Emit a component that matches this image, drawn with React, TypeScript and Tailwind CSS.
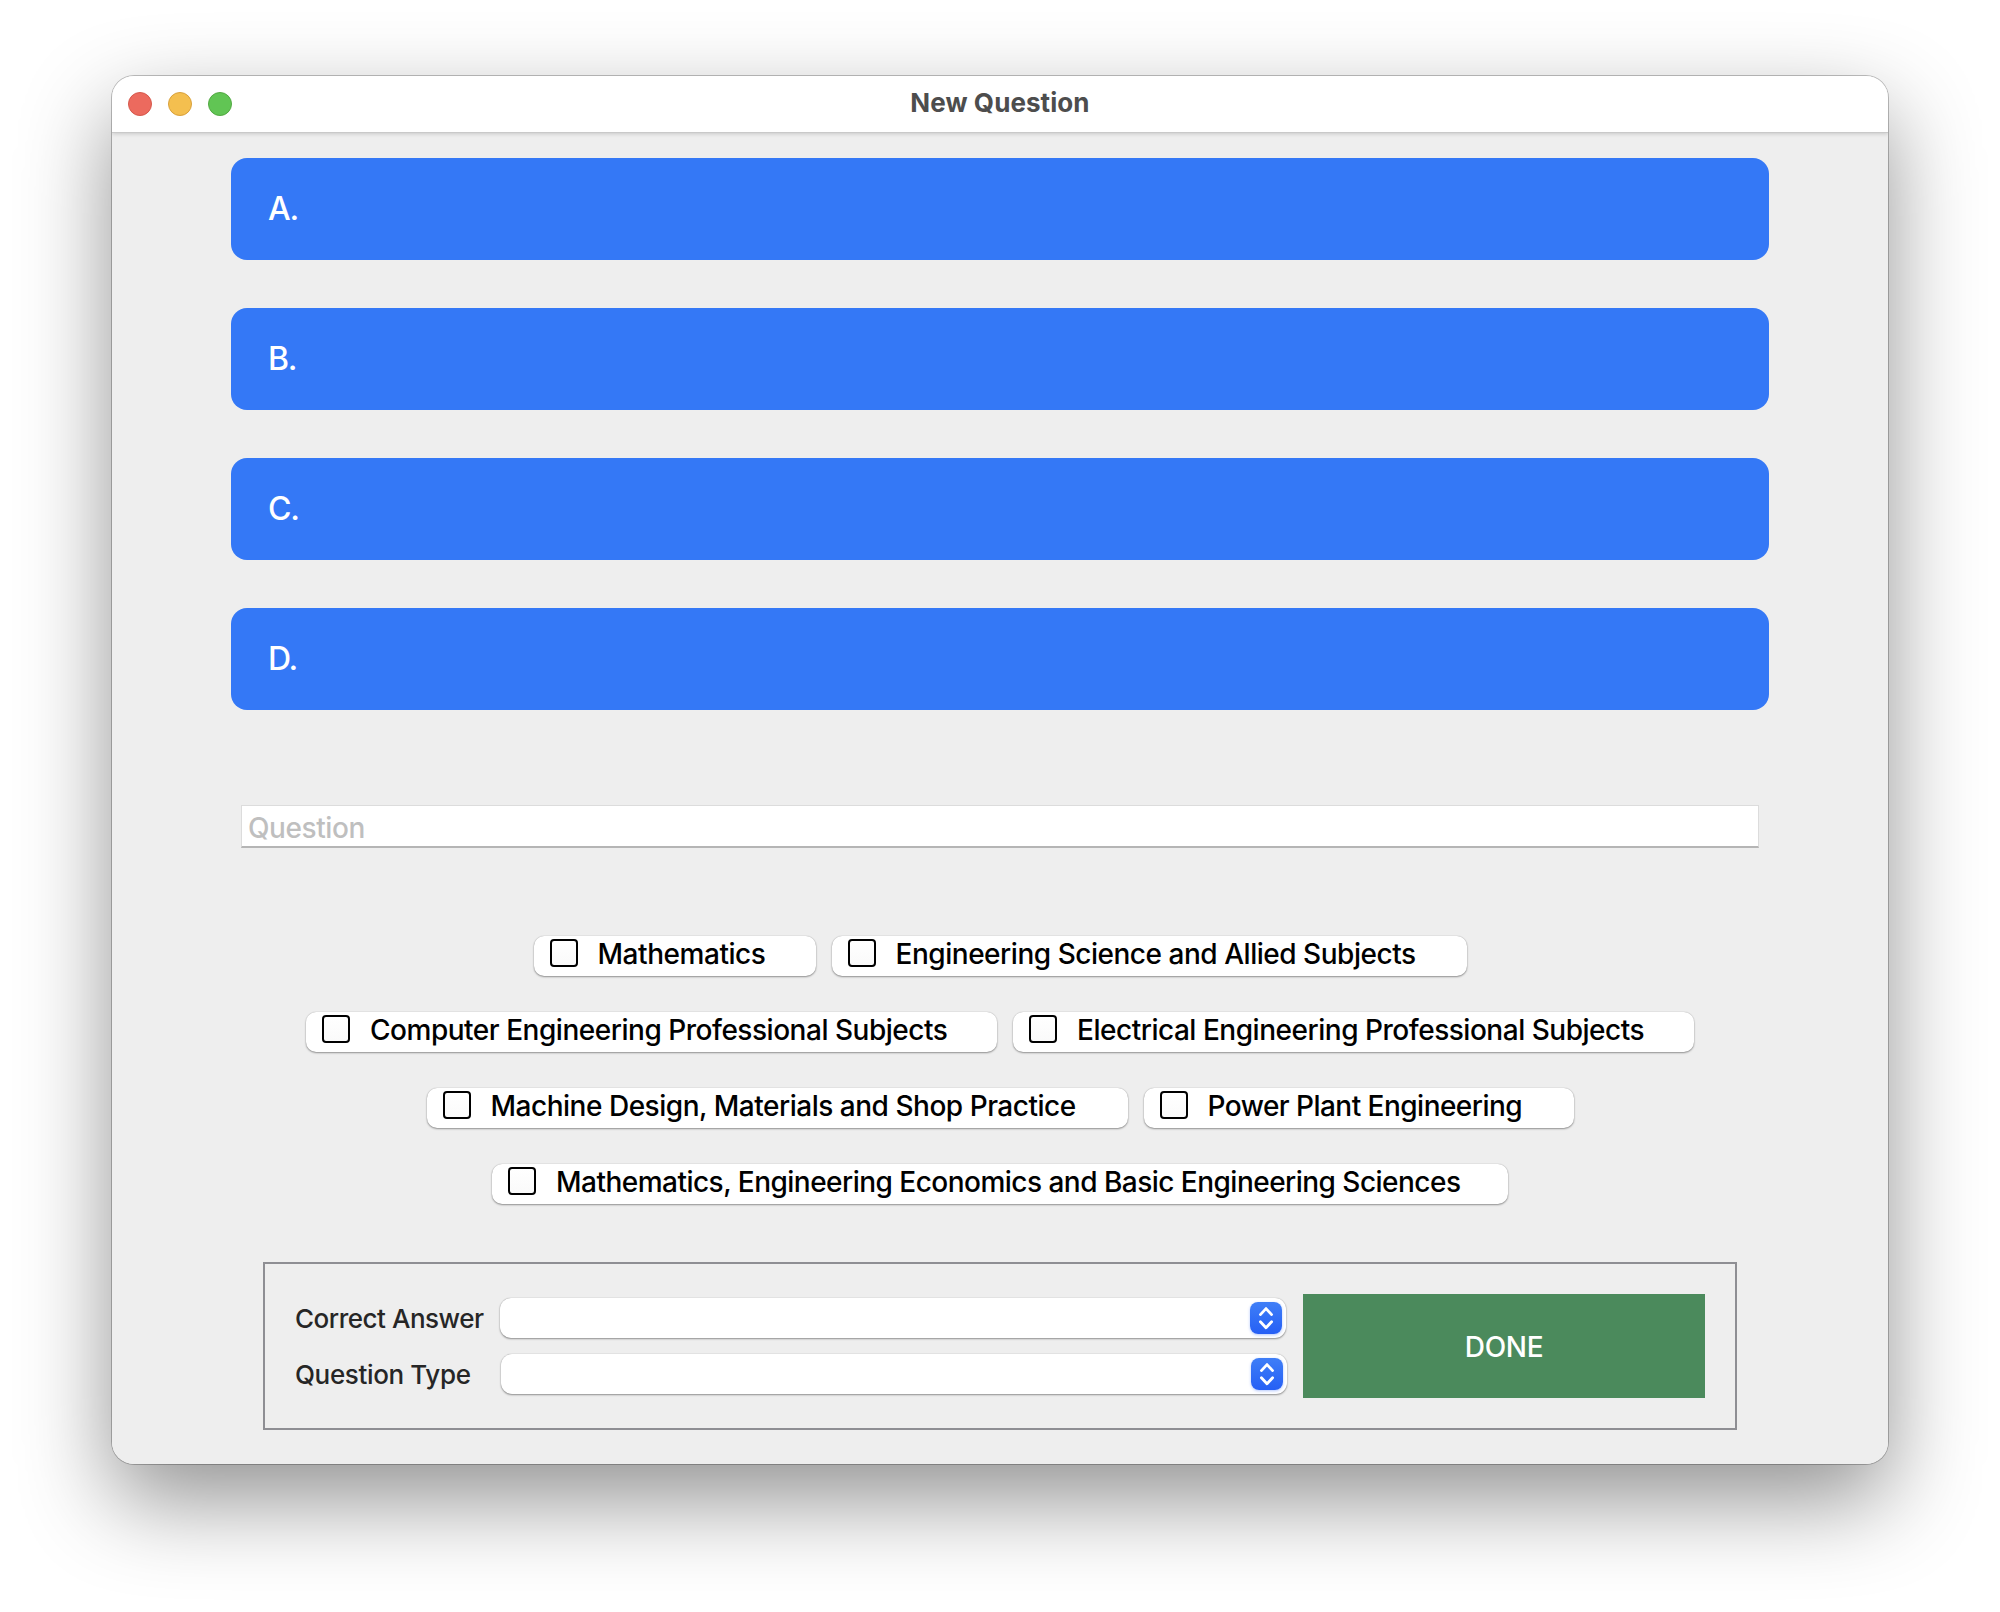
const choices = ["A.", "B.", "C.", "D."];

type Subject = { label: string; width: string; tracking: string };

const subjectRows: Subject[][] = [
  [
    { label: "Mathematics", width: "w-[282px]", tracking: "tracking-[-0.45px]" },
    { label: "Engineering Science and Allied Subjects", width: "w-[635px]", tracking: "tracking-[-0.47px]" },
  ],
  [
    { label: "Computer Engineering Professional Subjects", width: "w-[691px]", tracking: "tracking-[-0.475px]" },
    { label: "Electrical Engineering Professional Subjects", width: "w-[681px]", tracking: "tracking-[-0.475px]" },
  ],
  [
    { label: "Machine Design, Materials and Shop Practice", width: "w-[701px]", tracking: "tracking-[-0.48px]" },
    { label: "Power Plant Engineering", width: "w-[430px]", tracking: "tracking-[-0.53px]" },
  ],
  [
    {
      label: "Mathematics, Engineering Economics and Basic Engineering Sciences",
      width: "w-[1016px]",
      tracking: "tracking-[-0.52px]",
    },
  ],
];

function TitleBar() {
  return (
    <header className="relative grid h-14 shrink-0 grid-cols-3 items-center bg-white px-4 shadow-[0_1px_0_#c9c9c9,0_2px_4px_rgba(0,0,0,0.16)]">
      <div className="flex gap-4">
        <span className="size-6 rounded-full border border-[#d5584c] bg-[#ec6a5e]" />
        <span className="size-6 rounded-full border border-[#d8a03c] bg-[#f4bf4f]" />
        <span className="size-6 rounded-full border border-[#52a842] bg-[#61c554]" />
      </div>
      <h1 className="pb-[3px] text-center text-[26px] leading-8 font-bold tracking-[0.077px] text-[#4d4d4d]">
        New Question
      </h1>
    </header>
  );
}

function SubjectOption({ label, width, tracking }: Subject) {
  return (
    <label
      className={`flex h-10 items-start gap-5 rounded-[10px] bg-white pt-[3px] pl-4 shadow-[0_0_1px_rgba(0,0,0,0.3),0_1px_2px_rgba(0,0,0,0.38)] ${width}`}
    >
      <span className="size-7 shrink-0 rounded-[4px] border-2 border-black bg-linear-to-b from-white to-[#fafafa]" />
      <span className={`text-[28px] leading-[31px] font-[450] whitespace-nowrap text-black ${tracking}`}>{label}</span>
    </label>
  );
}

function Stepper() {
  return (
    <span className="flex h-8 w-8 items-center justify-center rounded-[8px] bg-linear-to-b from-[#3f7ef7] to-[#265ff5] shadow-[0_1px_3px_rgba(38,95,245,0.35)]">
      <svg width="32" height="32" viewBox="0 0 32 32" fill="none" stroke="white" strokeWidth="2.8" strokeLinecap="round" strokeLinejoin="round">
        <path d="M10.4 12.6 16 6.6l5.6 6" />
        <path d="M10.4 19.8 16 25.8l5.6-6" />
      </svg>
    </span>
  );
}

function Dropdown() {
  return (
    <div className="flex h-10 w-[786px] items-center justify-end rounded-[11px] bg-white pr-1 shadow-[0_0_1px_rgba(0,0,0,0.3),0_1px_2px_rgba(0,0,0,0.38)]">
      <Stepper />
    </div>
  );
}

export default function App() {
  return (
    <div className="h-[1612px] w-[2000px] overflow-hidden bg-white px-28 pt-[76px] font-['Inter',sans-serif]">
      <div className="rounded-[22px] shadow-[0_0_0_1px_rgba(0,0,0,0.24),0_36px_90px_rgba(0,0,0,0.43)]">
        <div className="flex h-[1388px] flex-col items-center overflow-hidden rounded-[22px] bg-[#eeeeee]">
          <div className="w-full">
            <TitleBar />
          </div>

          <div className="mt-[26px] flex w-[1538px] flex-col gap-12">
            {choices.map((choice) => (
              <div
                key={choice}
                className="flex h-[102px] items-center rounded-2xl bg-[#3478f6] pl-[37px] text-[32px] font-[450] tracking-[-1.2px] text-white"
              >
                {choice}
              </div>
            ))}
          </div>

          <div className="mt-[95px] h-[43px] w-[1518px] border border-b-2 border-[#dcdcdc] border-b-[#b5b5b5] bg-white pt-[3px] pl-1.5 text-[28px] leading-[38px] font-[450] tracking-[-0.43px] text-[#bfbfbf]">
            Question
          </div>

          <div className="mt-[88px] flex flex-col gap-9">
            {subjectRows.map((row) => (
              <div key={row[0].label} className="flex justify-center gap-4">
                {row.map((subject) => (
                  <SubjectOption key={subject.label} {...subject} />
                ))}
              </div>
            ))}
          </div>

          <div className="mt-[58px] flex h-[168px] w-[1474px] items-start border-2 border-[#8e8e93] pt-[30px] pl-[30px] text-[26px] font-[450] text-[#262626]">
            <div className="flex flex-col gap-4 pt-1">
              <div className="flex items-center">
                <span className="w-[205px] tracking-[-0.48px]">Correct Answer</span>
                <Dropdown />
              </div>
              <div className="flex items-center">
                <span className="w-[206px] tracking-[-0.36px]">Question Type</span>
                <Dropdown />
              </div>
            </div>
            <button className="ml-4 h-[104px] w-[402px] bg-[#4b8a5c] pt-0.5 text-[28px] tracking-[-0.3px] text-white">
              DONE
            </button>
          </div>
        </div>
      </div>
    </div>
  );
}
